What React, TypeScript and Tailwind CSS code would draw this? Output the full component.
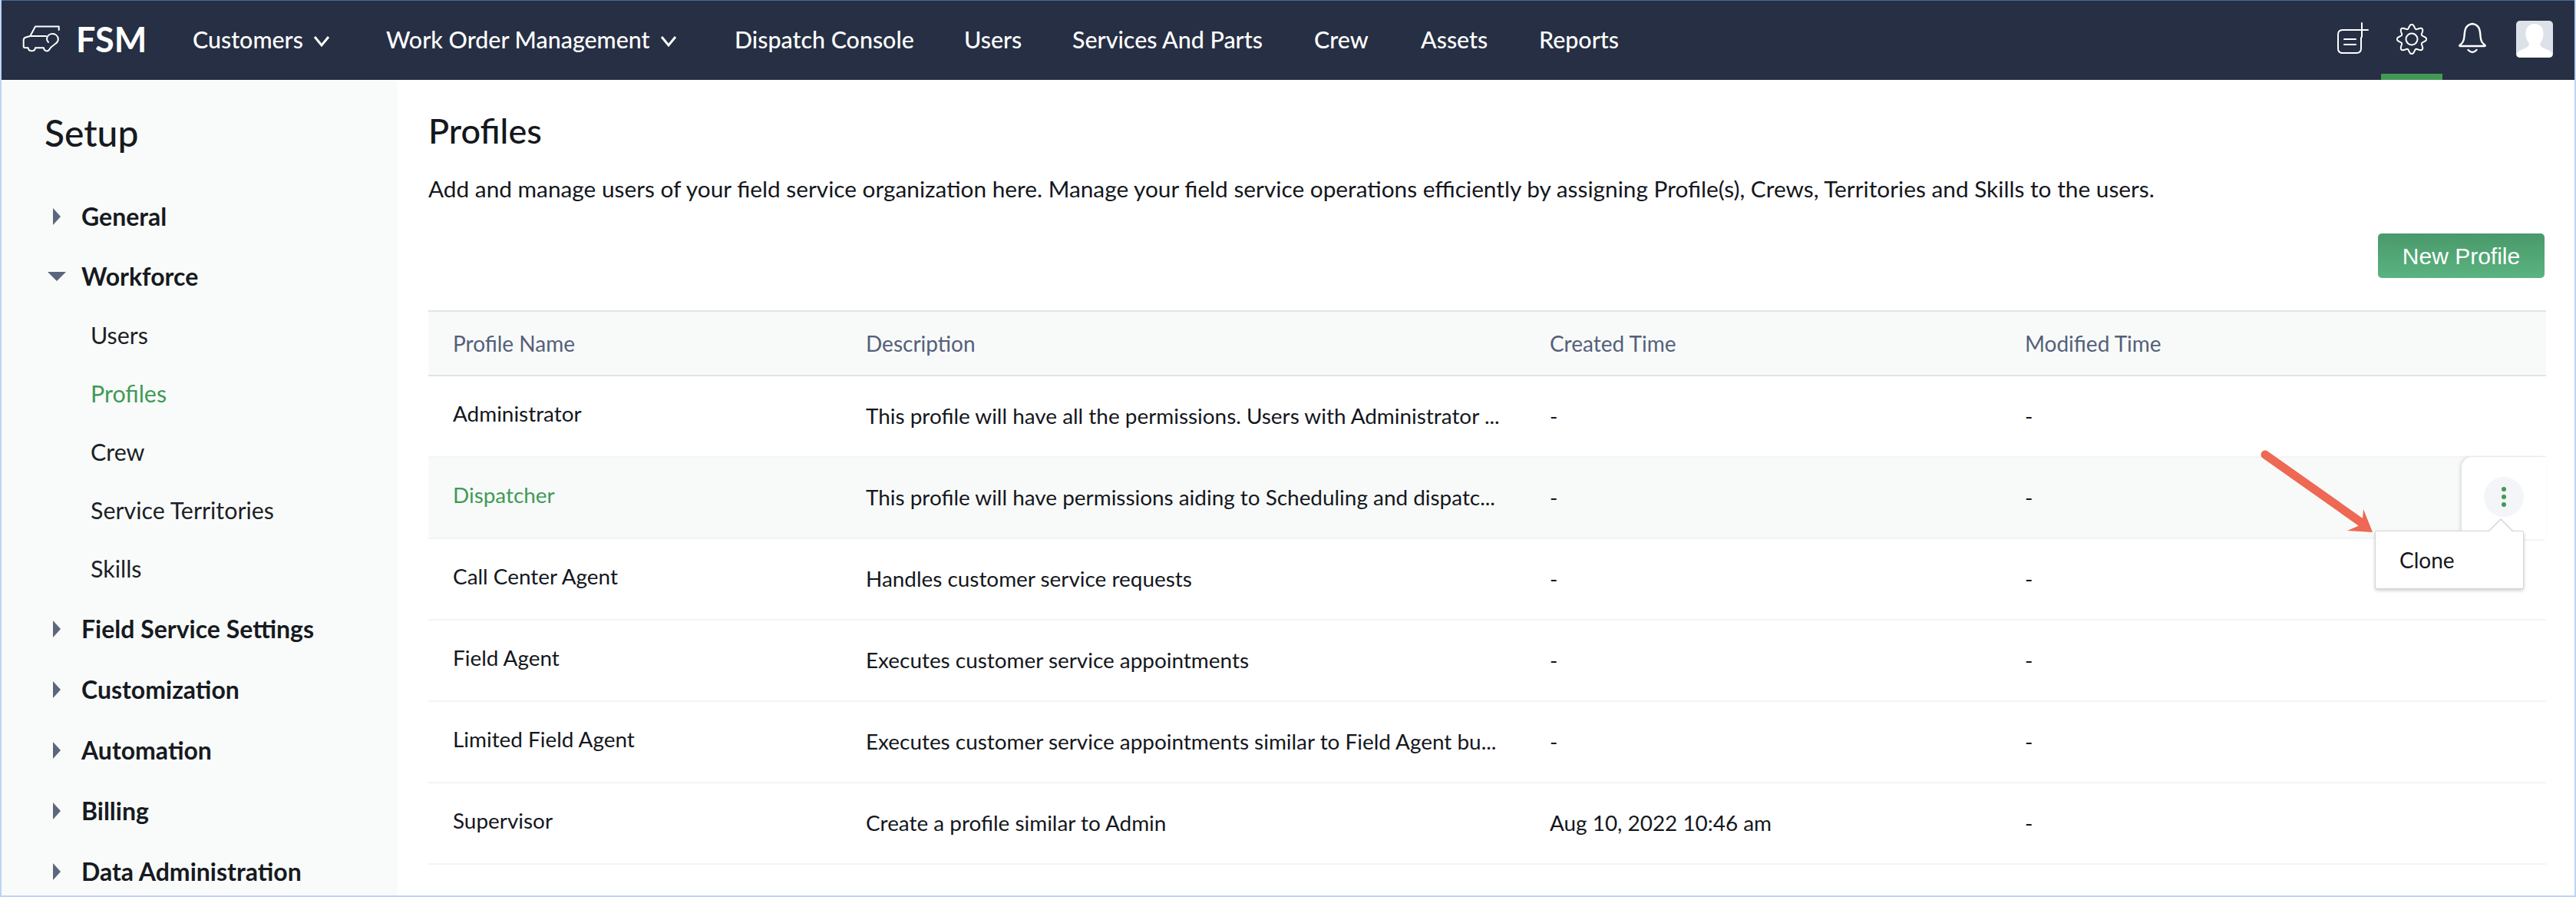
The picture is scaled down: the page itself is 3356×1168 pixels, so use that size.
import React from "react";

const LATO = "font-['Lato','Noto_Sans',sans-serif]";

function gearPath() {
  const pts: string[] = [];
  const n = 160;
  for (let i = 0; i <= n; i++) {
    const t = (i / n) * Math.PI * 2;
    const r = 16.6 + 2.6 * Math.cos(8 * t);
    pts.push(`${i === 0 ? "M" : "L"}${(20 + r * Math.sin(t)).toFixed(2)} ${(20 - r * Math.cos(t)).toFixed(2)}`);
  }
  return pts.join(" ") + "Z";
}

const nav = [
  { t: "Customers", chev: true, w: "w-[252px]" },
  { t: "Work Order Management", chev: true, w: "w-[454px]" },
  { t: "Dispatch Console", w: "w-[299px]" },
  { t: "Users", w: "w-[141px]" },
  { t: "Services And Parts", w: "w-[315px]" },
  { t: "Crew", w: "w-[139px]" },
  { t: "Assets", w: "w-[154px]" },
  { t: "Reports", w: "w-auto" },
];

const rows = [
  ["Administrator", "This profile will have all the permissions. Users with Administrator ...", "-", "-"],
  ["Dispatcher", "This profile will have permissions aiding to Scheduling and dispatc...", "-", "-"],
  ["Call Center Agent", "Handles customer service requests", "-", "-"],
  ["Field Agent", "Executes customer service appointments", "-", "-"],
  ["Limited Field Agent", "Executes customer service appointments similar to Field Agent bu...", "-", "-"],
  ["Supervisor", "Create a profile similar to Admin", "Aug 10, 2022 10:46 am", "-"],
];

function Right() {
  return (
    <svg width="12" height="24" viewBox="0 0 12 24" className="shrink-0">
      <path d="M1 1 L11 12 L1 23 Z" fill="#5c667e" />
    </svg>
  );
}
function Down() {
  return (
    <svg width="24" height="12" viewBox="0 0 24 12" className="shrink-0">
      <path d="M0 0 H24 L12 12 Z" fill="#5c667e" />
    </svg>
  );
}

function Group({ label, open, h }: { label: string; open?: boolean; h: string }) {
  return (
    <div className={`flex items-center pl-[60px] ${h}`}>
      <div className="w-[24px] flex justify-center mr-[20px] shrink-0">{open ? <Down /> : <Right />}</div>
      <span className="text-[32px] font-bold text-[#171a21] leading-none">{label}</span>
    </div>
  );
}

export default function App() {
  return (
    <div className={`relative w-[3356px] h-[1168px] overflow-hidden bg-white border-l-2 border-r-2 border-b-2 border-[#bdd4f2] ${LATO}`}>
      {/* Header */}
      <header className="flex items-center h-[104px] bg-[#262f43] border-t-[1px] border-[#47699c] text-white -mx-[1px] pb-[4px]">
        <div className="flex items-center w-[250px] shrink-0">
          <svg width="56" height="40" viewBox="26 30 56 40" fill="none" stroke="#fff" strokeWidth="2" strokeLinejoin="round" strokeLinecap="round" className="ml-[25px] shrink-0">
            <path d="M76.7 38 V33.5 H46 L39.3 46 L33 47.8 Q30.7 48.6 30.7 51.3 V59.5 Q30.7 61.3 33 61.3 H36.7 A4.7 4.7 0 0 0 46 61.3 H57 A4 4 0 0 0 63.5 64.5 Q66 60 71.5 56.5 Q76 53.5 75.8 49.5 A7.5 7.5 0 0 0 61 49 Q60.8 52 63 54" />
            <path d="M39.3 46 H60" />
          </svg>
          <span className="ml-[17px] mt-[2px] text-[45px] font-bold leading-none">FSM</span>
        </div>
        <nav className="flex items-center flex-1 mt-[2px] text-[30.4px] font-medium">
          {nav.map((n) => (
            <div key={n.t} className={`flex items-center shrink-0 ${n.w}`}>
              <span>{n.t}</span>
              {n.chev && (
                <svg width="24" height="16" viewBox="0 0 24 16" fill="none" stroke="#fff" strokeWidth="3" className="ml-[12px] mt-[6px]">
                  <path d="M3 2 L12 13 L21 2" />
                </svg>
              )}
            </div>
          ))}
        </nav>
        <div className="flex items-center h-full shrink-0 pr-[29px]">
          <svg width="42" height="44" viewBox="0 0 42 44" fill="none" stroke="#fff" strokeWidth="2" strokeLinecap="round">
            <path d="M23 10 H8 Q2 10 2 16 V34 Q2 40 8 40 H26 Q32 40 32 34 V20" />
            <path d="M10 22 H25 M10 29 H25" />
            <path d="M33 1 V19 M24 10 H41" />
          </svg>
          <div className="relative w-[80px] h-[99px] flex items-center justify-center ml-[16px]">
            <svg width="40" height="40" viewBox="0 0 40 40" fill="none" stroke="#fff" strokeWidth="2">
              <path d={gearPath()} />
              <circle cx="20" cy="20" r="7.5" />
            </svg>
            <div className="absolute left-0 right-0 top-[95px] h-[8px] bg-[#449855]" />
          </div>
          <svg width="36" height="42" viewBox="0 0 36 42" fill="none" stroke="#fff" strokeWidth="2.4" strokeLinecap="round" strokeLinejoin="round" className="ml-[21px] -mt-[2px]">
            <path d="M18 2 C9 3 8 10 7.5 18 C7 25 5 27 1.5 30 Q1 31 2 31 H34 Q35 31 34.5 30 C31 27 29 25 28.5 18 C28 10 27 3 18 2 Z" />
            <path d="M12.5 36 Q18 42 23.5 36" />
          </svg>
          <div className="relative ml-[39px] w-[48px] h-[48px] rounded-[5px] overflow-hidden bg-[#dde1ea]">
            <svg width="48" height="48" viewBox="0 0 48 48">
              <path fill="#fff" d="M24 4 C32 4 36 10 35.5 18 C35 24 33 27 31 30 C31 33 34 35 39 37 C44 39 48 41 48 48 H0 C0 41 4 39 9 37 C14 35 17 33 17 30 C15 27 13 24 12.5 18 C12 10 16 4 24 4 Z" />
            </svg>
          </div>
        </div>
      </header>

      <div className="flex h-[1062px]">
        {/* Sidebar */}
        <aside className="w-[516px] shrink-0 bg-[#f9fbfa] pt-[44px]">
          <div className="pl-[56px] text-[48px] leading-[50px] text-[#171a21] mb-[45px] font-medium">Setup</div>
          <div className="flex flex-col">
            <Group label="General" h="h-[78px]" />
            <Group label="Workforce" h="h-[78px]" open />
            {["Users", "Profiles", "Crew", "Service Territories", "Skills"].map((s) => (
              <div key={s} className={`pl-[116px] h-[76px] flex items-center text-[30.4px] ${s === "Profiles" ? "text-[#3f9a57]" : "text-[#1c1f26]"}`}>{s}</div>
            ))}
            {["Field Service Settings", "Customization", "Automation", "Billing", "Data Administration"].map((g) => (
              <Group key={g} label={g} h="h-[79px]" />
            ))}
          </div>
        </aside>

        {/* Main */}
        <main className="flex-1 pl-[40px] pr-[37px] pt-[38px] min-w-0">
          <h1 className="text-[45px] leading-[56px] text-[#14171d] font-medium">Profiles</h1>
          <p className="mt-[28px] text-[29.8px] leading-[40px] text-[#14171d] whitespace-nowrap">
            Add and manage users of your field service organization here. Manage your field service operations efficiently by assigning Profile(s), Crews, Territories and Skills to the users.
          </p>
          <div className="flex justify-end pr-[2px] mt-[38px]">
            <button className="w-[217px] h-[58px] rounded-[5px] bg-gradient-to-b from-[#4a996b] to-[#5ab380] text-white text-[30px] font-['Liberation_Sans',sans-serif]">New Profile</button>
          </div>
          <div className="mt-[42px]">
            <div className="grid grid-cols-[538px_891px_619px_1fr] h-[86px] items-center bg-[#f8faf9] border-y-2 border-[#dfe5e8] text-[28px] text-[#556079]">
              <div className="pl-[32px]">Profile Name</div>
              <div className="pl-[32px]">Description</div>
              <div className="pl-[32px]">Created Time</div>
              <div className="pl-[32px]">Modified Time</div>
            </div>
            {rows.map((r, i) => (
              <div key={r[0]} className={`relative grid grid-cols-[538px_891px_619px_1fr] h-[106px] items-center border-b-2 border-[#f2f4f7] text-[27.9px] text-[#14171d] ${i === 1 ? "bg-[#f8faf9]" : ""}`}>
                <div className={`pl-[32px] pb-[6px] whitespace-nowrap ${i === 1 ? "text-[#3f9a57]" : ""}`}>{r[0]}</div>
                <div className="pl-[32px] whitespace-nowrap">{r[1]}</div>
                <div className="pl-[32px] whitespace-nowrap">{r[2]}</div>
                <div className="pl-[32px] whitespace-nowrap">{r[3]}</div>
                {i === 1 && (
                  <div className="absolute right-0 top-[-1px] bottom-[-2px] w-[110px] bg-white rounded-tl-[14px] shadow-[-2px_0_4px_rgba(0,0,0,0.12)] flex justify-center pt-[26px]">
                    <div className="w-[52px] h-[52px] rounded-full bg-[#f3f5f8] flex flex-col items-center justify-center gap-[4px]">
                      <span className="w-[6px] h-[6px] rounded-full bg-[#449855]" />
                      <span className="w-[6px] h-[6px] rounded-full bg-[#449855]" />
                      <span className="w-[6px] h-[6px] rounded-full bg-[#449855]" />
                    </div>
                  </div>
                )}
              </div>
            ))}
          </div>
        </main>
      </div>

      {/* Popover menu */}
      <div className="absolute left-[3092px] top-[691px] w-[194px] h-[76px] bg-white border border-[#d6d6d6] rounded-[3px] shadow-[0_2px_4px_rgba(0,0,0,0.2)] flex items-center pl-[31px] text-[28px] text-[#14171d]">
        Clone
      </div>
      <svg width="34" height="18" viewBox="0 0 34 18" className="absolute left-[3239px] top-[675px]">
        <path d="M1 17 L17 1 L33 17" fill="#fff" stroke="#d6d6d6" strokeWidth="1.5" />
      </svg>

      {/* Annotation arrow */}
      <svg width="170" height="120" viewBox="0 0 170 120" className="absolute left-[2938px] top-[582px]">
        <path d="M11 10 L140 101" stroke="#ee6853" strokeWidth="11" strokeLinecap="round" fill="none" />
        <path d="M139 81 L151 111 L118 109 L132 103 L138 93 Z" fill="#ee6853" />
      </svg>
    </div>
  );
}
